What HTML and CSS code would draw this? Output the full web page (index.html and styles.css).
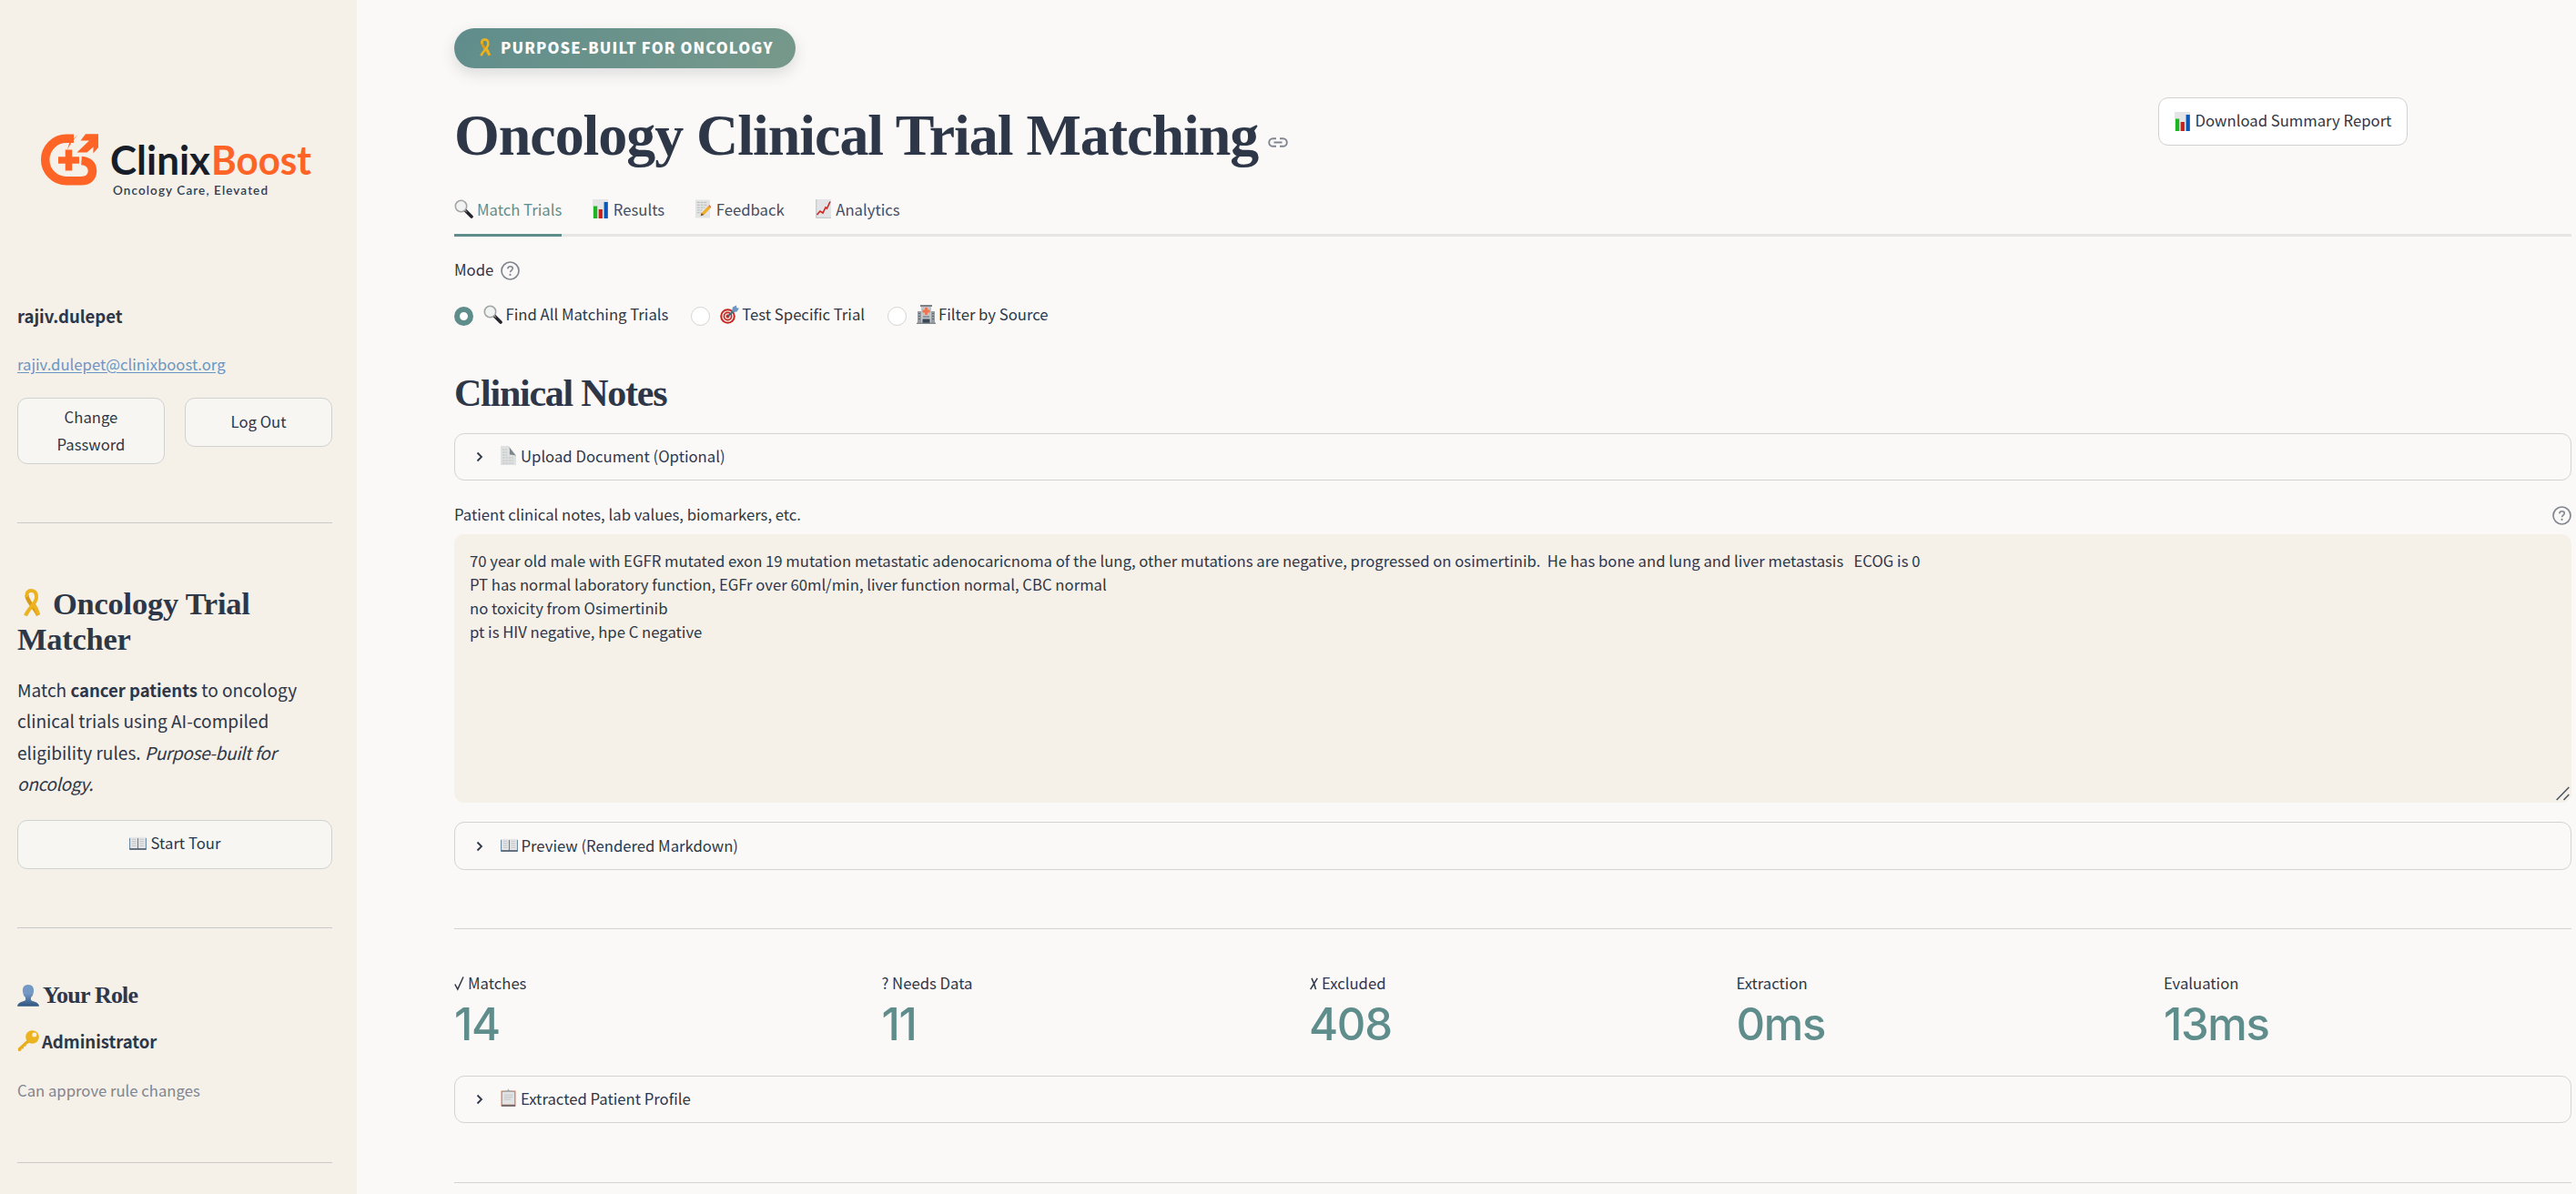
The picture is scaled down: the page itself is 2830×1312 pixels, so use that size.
FILE: index.html
```
<!DOCTYPE html>
<html lang="en">
<head>
  <meta charset="UTF-8">
  <meta name="viewport" content="width=device-width, initial-scale=1.0">
  <title>Oncology Clinical Trial Matching</title>
  <link rel="stylesheet" href="styles.css">
</head>
<body>
  <!-- icon sprite -->
  <svg class="sprite" aria-hidden="true">
    <defs>
      <linearGradient id="person" x1="0" y1="0" x2="0" y2="1">
        <stop offset="0.4" stop-color="#7399c4"/>
        <stop offset="1" stop-color="#2f557f"/>
      </linearGradient>
    </defs>
    <symbol id="i-ribbon" viewBox="0 0 20 32">
      <path d="M4.500 7C4.500 14 13 20 17 29" fill="none" stroke="#d99a17" stroke-width="4.400"/>
      <path d="M5 9C3.500 4 6 2 9.500 2S15.500 4.500 15 10C14 17 6.500 21 3 29.500" fill="none" stroke="#ebb31f" stroke-width="4"/>
      <path d="M11 15.500C13.500 19 15.500 22.500 17.300 28.500" fill="none" stroke="#ebb31f" stroke-width="4"/>
    </symbol>
    <symbol id="i-search" viewBox="0 0 21 21">
      <path d="M12.500 12.500l6.500 6.500" stroke="#23252b" stroke-width="3.600" stroke-linecap="round"/>
      <path d="M11 11l3 3" stroke="#777" stroke-width="1.600"/>
      <circle cx="7.500" cy="7.500" r="6.200" fill="#f1f3f3" stroke="#a3a5a5" stroke-width="1.600"/>
    </symbol>
    <symbol id="i-chart" viewBox="0 0 17 21">
      <rect width="17" height="21" fill="#e4e5e6"/>
      <rect x="1" y="7.500" width="4.200" height="13.500" fill="#1eb525"/>
      <rect x="6.700" y="11" width="4.200" height="10" fill="#c32420"/>
      <rect x="12.600" y="3" width="4.200" height="18" fill="#0b57b8"/>
    </symbol>
    <symbol id="i-memo" viewBox="0 0 18 21">
      <rect width="17" height="21" fill="#e3e4e4"/>
      <path d="M2 3h12M2 6h12M2 9h9M2 12h6M2 15h5" stroke="#b3b6b8" stroke-width="1" stroke-dasharray="3 1"/>
      <path d="M7 15.500L15 7l2.800 2.300-7.800 8.200-4 1.200z" fill="#f0ae26"/>
      <path d="M15 7l1.300-1.300 2 2.100L17.500 9.600z" fill="#e0766b"/>
      <path d="M7 15.500l3 2-4 1.200z" fill="#705134"/>
    </symbol>
    <symbol id="i-trend" viewBox="0 0 17 21">
      <rect width="17" height="21" fill="#e3e4e5"/>
      <path d="M.8 0v20.300H17" fill="none" stroke="#c2c4c6" stroke-width="1"/>
      <path d="M1.500 17l3.500-4 3 2 3-6 1.500 1L16 2.500" fill="none" stroke="#c92a25" stroke-width="1.600"/>
    </symbol>
    <symbol id="i-target" viewBox="0 0 21 21">
      <circle cx="8.500" cy="12.500" r="8.300" fill="#c42a22"/>
      <circle cx="8.500" cy="12.500" r="5.600" fill="none" stroke="#f5e8e4" stroke-width="1.400"/>
      <circle cx="8.500" cy="12.500" r="2.600" fill="none" stroke="#f5e8e4" stroke-width="1.300"/>
      <path d="M8.500 12.500l8-7" stroke="#47637d" stroke-width="1.700"/>
      <path d="M13 6.500l1-4L18 .5l.3 2.800 2.700.5-2.500 3.700-3.500.5z" fill="#6c98bf"/>
    </symbol>
    <symbol id="i-hospital" viewBox="0 0 21 21">
      <path d="M4 0h13v2H4z" fill="#7b8089"/>
      <path d="M5 2h11v19H5z" fill="#c3c6c8"/>
      <path d="M1 7h4v14H1zM16 7h4v14h-4z" fill="#989da2"/>
      <path d="M2 9.500h2M2 12.500h2M2 15.500h2M17 9.500h2M17 12.500h2M17 15.500h2M7 13h7" stroke="#5c6670" stroke-width="1.200"/>
      <path d="M10.500 3v8M6.500 7h8" stroke="#ee744e" stroke-width="2.800"/>
      <path d="M6.500 15.500h8V21h-8z" fill="#394658"/>
      <path d="M0 20.300h21" stroke="#83898d" stroke-width="1.400"/>
    </symbol>
    <symbol id="i-page" viewBox="0 0 17 21">
      <path d="M0 0h8.500L17 10v11H0z" fill="#dfe1e1"/>
      <path d="M8.500 0c2.500 3 1 7.500 1.500 9.500 3 .5 5 0 7 1.500z" fill="#7f868b"/>
      <path d="M2 4h5M2 7h5M2 10h5M2 13h12M2 16h12M2 19h12" stroke="#bbbfc1" stroke-width=".9" stroke-dasharray="2.500 1"/>
    </symbol>
    <symbol id="i-book" viewBox="0 0 20 16">
      <path d="M0 1.500h20V15H0z" fill="#6f8ca5"/>
      <path d="M1.200.8C5 0 8 .3 10 1.800 12 .3 15 0 18.800.8V13.500H1.200z" fill="#e6e7e8"/>
      <path d="M10 1.800v12" stroke="#777c82" stroke-width="1.200"/>
      <path d="M3 3h5M3 5.500h5M3 8h5M3 10.500h5M12 3h5M12 5.500h5M12 8h5M12 10.500h5" stroke="#c1c3c6" stroke-width="1"/>
      <path d="M.5 14.300h19" stroke="#505a66" stroke-width="1.500"/>
    </symbol>
    <symbol id="i-clipboard" viewBox="0 0 18 21">
      <path d="M.5 2h17v18H.5z" fill="#c58a73"/>
      <path d="M2 3.500h14V18H2z" fill="#e2e3e4"/>
      <path d="M1 19.500h16" stroke="#4c535f" stroke-width="1.400"/>
      <path d="M4.500 3.500V2h3L9 0l1.500 2h3v1.500z" fill="#a6aaad"/>
      <path d="M4 7h10M4 9.500h10M4 12h8" stroke="#c1c3c5" stroke-width="1"/>
    </symbol>
    <symbol id="i-person" viewBox="0 0 24 24">
      <path d="M12 0c4.500 0 6.500 3 6 7.500-.4 3.500-1.500 5.500-3 6.500v3c1.500 1.700 8.500 1.500 9 6.800H0c.5-5.300 7.500-5.100 9-6.800v-3c-1.500-1-2.600-3-3-6.500C5.500 3 7.500 0 12 0z" fill="url(#person)"/>
    </symbol>
    <symbol id="i-key" viewBox="0 0 24 24">
      <path d="M10.500 11L.8 20l.2 3 3-.3.600-2 2.200-.5.500-2.200 2.200-.4.500-2L14 13.500z" fill="#e6ad1d"/>
      <circle cx="16.500" cy="7.500" r="7.300" fill="#ebb31f"/>
      <circle cx="18.800" cy="5" r="2.500" fill="#f8efe0"/>
    </symbol>
    <symbol id="i-help" viewBox="0 0 21 21">
      <circle cx="10.500" cy="10.500" r="9.500" fill="none" stroke="#808591" stroke-width="1.700"/>
      <path d="M7.800 8.300c.2-1.700 1.300-2.500 2.800-2.500 1.600 0 2.700.9 2.700 2.300 0 2-2.700 2.200-2.700 4.200" fill="none" stroke="#808591" stroke-width="1.600"/>
      <circle cx="10.500" cy="14.900" r="1.100" fill="#808591"/>
    </symbol>
    <symbol id="i-chevron" viewBox="0 0 8 12">
      <path d="M1.500 1.500L6 6l-4.500 4.500" fill="none" stroke="#2d3748" stroke-width="1.800"/>
    </symbol>
  </svg>

  <div class="app">
    <aside class="sidebar">
      <svg class="logo" viewBox="0 0 346 90" role="img" aria-label="ClinixBoost">
        <g fill="none" stroke="#ff6427" stroke-width="9.500">
          <path d="M62 15.200H54a23.300 23.300 0 0 0 0 46.600H70c9 0 12.500-5 12.500-11C82.500 44 78 40 70.500 39.500"/>
          <path d="M56.500 27.500v23M45 39h23" stroke-width="7.500"/>
        </g>
        <path d="M67 10.500L57 20.500l-2 7 4.500-8z" fill="#ff6427"/>
        <path d="M75 10.200H89V25l-5.500 6.500V24.500L76.500 30.500H65.500L79 17.500H69.500z" fill="#ff6427"/>
        <text class="logo-name" x="102" y="55" textLength="110" lengthAdjust="spacingAndGlyphs">Clinix</text>
        <text class="logo-name logo-accent" x="213" y="55" textLength="110" lengthAdjust="spacingAndGlyphs">Boost</text>
        <text class="logo-tag" x="105" y="76.500" textLength="170">Oncology Care, Elevated</text>
      </svg>

      <p class="user-name">rajiv.dulepet</p>
      <p class="user-email"><a href="#">rajiv.dulepet@clinixboost.org</a></p>
      <div class="user-actions">
        <button class="btn">Change Password</button>
        <button class="btn">Log Out</button>
      </div>

      <hr>

      <h2 class="side-title"><svg class="icon-ribbon"><use href="#i-ribbon"/></svg>Oncology Trial Matcher</h2>
      <p class="side-text">Match <strong>cancer patients</strong> to oncology clinical trials using AI-compiled eligibility rules. <em>Purpose-built for oncology.</em></p>
      <button class="btn tour"><svg class="icon-book"><use href="#i-book"/></svg>Start Tour</button>

      <hr>

      <h3 class="role-title"><svg class="icon-lg"><use href="#i-person"/></svg>Your Role</h3>
      <p class="role-name"><svg class="icon-lg"><use href="#i-key"/></svg>Administrator</p>
      <p class="role-note">Can approve rule changes</p>

      <hr>
    </aside>

    <main class="main">
      <div class="badge"><svg class="badge-ribbon"><use href="#i-ribbon"/></svg>PURPOSE-BUILT FOR ONCOLOGY</div>

      <header class="header">
        <h1>Oncology Clinical Trial Matching</h1>
        <svg class="anchor" viewBox="0 0 22 11"><path d="M9 1.200H5.500a4.300 4.300 0 0 0 0 8.600H9M13 1.200h3.500a4.300 4.300 0 0 1 0 8.600H13M6.500 5.500h9" fill="none" stroke="#808591" stroke-width="1.900"/></svg>
        <button class="btn download"><svg class="icon-doc"><use href="#i-chart"/></svg>Download Summary Report</button>
      </header>

      <nav class="tabs">
        <a class="tab active" href="#"><svg class="icon-sm"><use href="#i-search"/></svg>Match Trials</a>
        <a class="tab" href="#"><svg class="icon-doc"><use href="#i-chart"/></svg>Results</a>
        <a class="tab" href="#"><svg class="icon-doc"><use href="#i-memo"/></svg>Feedback</a>
        <a class="tab" href="#"><svg class="icon-doc"><use href="#i-trend"/></svg>Analytics</a>
      </nav>

      <div class="mode-label">Mode<svg class="icon-sm help"><use href="#i-help"/></svg></div>
      <div class="radios">
        <label class="radio"><span class="dot checked"></span><svg class="icon-sm"><use href="#i-search"/></svg>Find All Matching Trials</label>
        <label class="radio"><span class="dot"></span><svg class="icon-sm"><use href="#i-target"/></svg>Test Specific Trial</label>
        <label class="radio"><span class="dot"></span><svg class="icon-sm"><use href="#i-hospital"/></svg>Filter by Source</label>
      </div>

      <h2 class="section-title">Clinical Notes</h2>
      <div class="expander upload"><svg class="chevron"><use href="#i-chevron"/></svg><svg class="icon-doc"><use href="#i-page"/></svg>Upload Document (Optional)</div>

      <div class="notes-label">Patient clinical notes, lab values, biomarkers, etc.<svg class="icon-sm help"><use href="#i-help"/></svg></div>
      <div class="notes-wrap">
        <textarea class="notes" spellcheck="false">70 year old male with EGFR mutated exon 19 mutation metastatic adenocaricnoma of the lung, other mutations are negative, progressed on osimertinib.  He has bone and lung and liver metastasis   ECOG is 0
PT has normal laboratory function, EGFr over 60ml/min, liver function normal, CBC normal
no toxicity from Osimertinib
pt is HIV negative, hpe C negative</textarea>
        <svg class="grip" viewBox="0 0 15 16"><path d="M.7 15L14.300 1M8.500 15l5.800-6" stroke="#4a5263" stroke-width="1.500"/></svg>
      </div>

      <div class="expander preview"><svg class="chevron"><use href="#i-chevron"/></svg><svg class="icon-book"><use href="#i-book"/></svg>Preview (Rendered Markdown)</div>

      <hr>

      <div class="metrics">
        <div class="metric"><div class="metric-label"><svg class="check" viewBox="0 0 11 17"><path d="M.8 9.500l3 5.500L10 1.500" fill="none" stroke="#2d3748" stroke-width="1.500"/></svg>Matches</div><div class="metric-value">14</div></div>
        <div class="metric"><div class="metric-label">? Needs Data</div><div class="metric-value">11</div></div>
        <div class="metric"><div class="metric-label"><svg class="cross" viewBox="0 0 9 14"><path d="M2 .8c1.500 3 3.500 8 4.500 12.400M8.300.8L.7 13.200" fill="none" stroke="#2d3748" stroke-width="1.500"/></svg>Excluded</div><div class="metric-value">408</div></div>
        <div class="metric"><div class="metric-label">Extraction</div><div class="metric-value">0ms</div></div>
        <div class="metric"><div class="metric-label">Evaluation</div><div class="metric-value">13ms</div></div>
      </div>

      <div class="expander profile"><svg class="chevron"><use href="#i-chevron"/></svg><svg class="icon-doc"><use href="#i-clipboard"/></svg>Extracted Patient Profile</div>

      <hr>
    </main>
  </div>
</body>
</html>
```
FILE: styles.css
```
* {
  box-sizing: border-box;
}
body {
  margin: 0;
  background: #faf9f7;
  color: #2d3748;
  font-family: "Noto Sans CJK SC", "Open Sans", sans-serif;
  font-size: 16.7px;
  line-height: 26px;
}
h1, h2, h3, p {
  margin: 0;
}
h1, h2, h3 {
  font-family: "Liberation Serif", serif;
  font-weight: bold;
}
svg {
  flex: none;
}
hr {
  width: 100%;
  height: 1px;
  margin: 64px 0 0;
  border: none;
  background: #d3d3d3;
}
.sprite {
  position: absolute;
  width: 0;
  height: 0;
}
.app {
  display: flex;
  height: 1312px;
  overflow: hidden;
}

/* icons */
.icon-sm {
  width: 21px;
  height: 21px;
}
.icon-doc {
  width: 17px;
  height: 21px;
}
.icon-book {
  width: 19px;
  height: 16px;
}
.icon-lg {
  width: 24px;
  height: 24px;
}

/* sidebar */
.sidebar {
  flex: none;
  width: 392px;
  padding: 137px 27px 0 19px;
  background: #f5f0e8;
}
.sidebar hr {
  background: #c9cac8;
}
.logo {
  display: block;
  width: 346px;
  height: 90px;
}
.logo-name {
  font: bold 43px Lato, sans-serif;
  fill: #171e29;
}
.logo-accent {
  fill: #ff6427;
}
.logo-tag {
  font: 600 13.5px Lato, sans-serif;
  fill: #333d52;
}
.user-name {
  margin-top: 103px;
  font-size: 18.6px;
  font-weight: bold;
  line-height: 34px;
  letter-spacing: -.05px;
}
.user-email {
  margin-top: 21px;
  line-height: 30px;
}
.user-email a {
  color: #6b96c4;
  text-underline-offset: 2px;
}
.user-actions {
  display: grid;
  grid-template-columns: 1fr 1fr;
  align-items: start;
  gap: 22px;
  margin-top: 22px;
}
.btn {
  display: flex;
  align-items: center;
  justify-content: center;
  padding: 0 18px 1px;
  border: 1px solid #d0d1d0;
  border-radius: 11px;
  background: #f8f6f2;
  color: inherit;
  font: inherit;
  line-height: 29.500px;
}
.user-actions .btn {
  min-height: 54px;
  padding: 6px 36px;
}
.user-actions .btn:last-child {
  padding: 0 0 1px;
}
.side-title {
  margin-top: 69px;
  font-size: 34.5px;
  line-height: 39px;
  letter-spacing: -.25px;
}
.icon-ribbon {
  width: 20px;
  height: 32px;
  margin: 0 13px 0 6px;
  vertical-align: -4px;
}
.side-text {
  margin-top: 19px;
  font-size: 19.1px;
  line-height: 34.300px;
}
.side-text strong {
  font-size: 18.6px;
  letter-spacing: -.05px;
}
.side-text em {
  letter-spacing: -.4px;
}
.tour {
  width: 100%;
  height: 54px;
  margin-top: 22.500px;
  gap: 5px;
}
.role-title, .role-name {
  display: flex;
  align-items: center;
}
.role-title {
  gap: 4px;
  margin-top: 58px;
  font-size: 26px;
  line-height: 32px;
  letter-spacing: -.8px;
}
.role-name {
  gap: 3px;
  margin-top: 17px;
  font-size: 18.6px;
  font-weight: bold;
  line-height: 34px;
  letter-spacing: -.05px;
}
.role-note {
  margin-top: 22px;
  color: #808591;
  line-height: 30px;
}

/* main */
.main {
  flex: 1;
  padding: 31px 5px 0 107px;
}
.badge {
  display: flex;
  align-items: center;
  width: 375px;
  height: 44px;
  padding: 0 0 2px 27px;
  border-radius: 22px;
  background: linear-gradient(135deg, #5f8d8c, #77998b);
  box-shadow: 0 6px 16px rgba(45, 55, 72, .15);
  color: #fff;
  font-size: 16.5px;
  font-weight: 900;
  letter-spacing: 1.130px;
  white-space: nowrap;
}
.badge-ribbon {
  width: 14px;
  height: 21px;
  margin-right: 10px;
}
.header {
  display: flex;
  align-items: flex-start;
  height: 77px;
  margin-top: 32px;
}
h1 {
  padding-top: 7px;
  font-size: 64px;
  line-height: 70px;
  letter-spacing: -1.050px;
  white-space: nowrap;
}
.anchor {
  width: 22px;
  height: 11px;
  margin: 44px 0 0 11px;
}
.download {
  width: 274px;
  height: 53px;
  margin: 0 180px 0 auto;
  gap: 6px;
  background: #fff;
  white-space: nowrap;
}
.tabs {
  display: flex;
  gap: 34px;
  height: 51px;
  margin-top: 25px;
  border-bottom: 3px solid #e6e6e5;
}
.tab {
  display: flex;
  align-items: center;
  gap: 5px;
  height: 51px;
  padding-bottom: 7px;
  border-bottom: 3px solid transparent;
  color: #454e5f;
  text-decoration: none;
}
.tab.active {
  border-bottom-color: #5f8d8c;
  color: #5f8d8c;
}
.tab .icon-sm {
  margin-right: -1px;
}
.tab .icon-doc {
  margin-right: .6px;
}
.mode-label {
  display: flex;
  align-items: center;
  gap: 8px;
  margin-top: 23px;
}
.help {
  margin-top: 3px;
}
.radios {
  display: flex;
  gap: 24.500px;
  margin-top: 23px;
}
.radio {
  display: flex;
  align-items: center;
}
.radio .icon-sm {
  margin: 1px 3.500px 0 11px;
}
.dot {
  width: 21px;
  height: 21px;
  margin-top: 5px;
  border: 1.500px solid #d3d3d3;
  border-radius: 50%;
  background: #fff;
}
.dot.checked {
  border: 6.500px solid #5f8d8c;
}
.section-title {
  margin-top: 49px;
  font-size: 42px;
  line-height: 50px;
  letter-spacing: -1.250px;
}
.expander {
  display: flex;
  align-items: center;
  height: 52px;
  padding: 0 22px 3px;
  border: 1px solid #d3d3d3;
  border-radius: 11px;
}
.chevron {
  width: 8px;
  height: 12px;
  margin: 2px 19px 0 1px;
}
.expander .icon-doc {
  margin-right: 5px;
}
.expander .icon-book {
  margin-right: 3.500px;
}
.upload {
  margin-top: 19px;
}
.notes-label {
  display: flex;
  justify-content: space-between;
  align-items: center;
  margin-top: 24px;
}
.notes-wrap {
  position: relative;
  height: 295px;
  margin-top: 9px;
}
.notes {
  display: block;
  width: 100%;
  height: 100%;
  padding: 15.500px 17px;
  border: none;
  border-radius: 11px;
  background: #f5f0e8;
  color: inherit;
  font: inherit;
  resize: none;
}
.grip {
  position: absolute;
  right: 2px;
  bottom: 2px;
  width: 15px;
  height: 16px;
}
.preview {
  height: 53px;
  margin-top: 21px;
  padding-bottom: 1px;
}
.metrics {
  display: grid;
  grid-template-columns: repeat(5, 1fr);
  column-gap: 21.400px;
  margin: 46px 0 25px;
}
.metric-label {
  display: flex;
  align-items: center;
}
.metric-value {
  height: 64px;
  color: #5f8d8c;
  font-family: Inter, sans-serif;
  font-size: 49px;
  font-weight: 500;
  line-height: 66px;
  letter-spacing: -1.300px;
}
.profile + hr {
  margin-top: 65px;
}
.check {
  width: 11px;
  height: 17px;
  margin: 1px 4px 0 0;
}
.cross {
  width: 9px;
  height: 14px;
  margin: 2px 4px 0 1px;
}
```
